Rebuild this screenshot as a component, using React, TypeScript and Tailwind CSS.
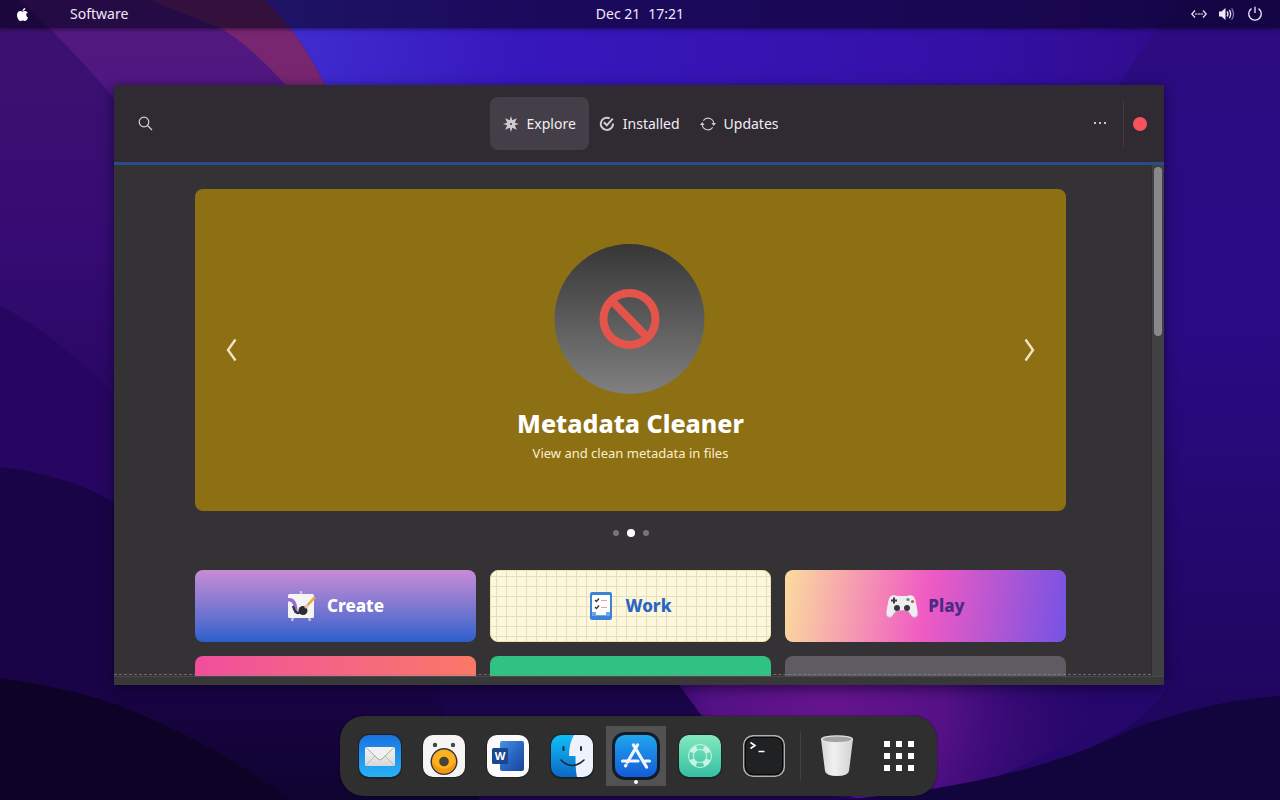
import type { ReactNode } from "react";
import { FaApple } from "react-icons/fa";

function Wallpaper() {
  return (
    <svg
      className="absolute inset-0 h-full w-full"
      viewBox="0 0 1280 800"
      preserveAspectRatio="none"
      aria-hidden="true"
    >
      <defs>
        <linearGradient id="wp-base" x1="0" y1="0" x2="1" y2="1">
          <stop offset="0" stopColor="#3c1590" />
          <stop offset="0.45" stopColor="#3210a0" />
          <stop offset="0.7" stopColor="#2a0c80" />
          <stop offset="1" stopColor="#1c0656" />
        </linearGradient>
        <linearGradient id="wp-top" x1="0" y1="0" x2="1" y2="0">
          <stop offset="0" stopColor="#402fd2" />
          <stop offset="0.25" stopColor="#3718bd" />
          <stop offset="0.7" stopColor="#3510a6" />
          <stop offset="0.95" stopColor="#2d0b84" />
          <stop offset="1" stopColor="#2b0a7c" />
        </linearGradient>
        <linearGradient id="wp-left" x1="0" y1="0" x2="0" y2="1">
          <stop offset="0" stopColor="#3c126e" />
          <stop offset="0.5" stopColor="#360c74" />
          <stop offset="1" stopColor="#25065f" />
        </linearGradient>
        <linearGradient id="wp-violet" gradientUnits="userSpaceOnUse" x1="0" y1="28" x2="0" y2="120">
          <stop offset="0" stopColor="#52197f" />
          <stop offset="0.6" stopColor="#501782" />
          <stop offset="1" stopColor="#3e1078" />
        </linearGradient>
        <linearGradient id="wp-right" x1="0" y1="0" x2="0" y2="1">
          <stop offset="0" stopColor="#2c0c7f" />
          <stop offset="0.4" stopColor="#2b0b85" />
          <stop offset="0.75" stopColor="#230768" />
          <stop offset="1" stopColor="#1c0556" />
        </linearGradient>
        <linearGradient id="wp-deep" x1="0" y1="0" x2="0" y2="1">
          <stop offset="0" stopColor="#1a0446" />
          <stop offset="1" stopColor="#0f0330" />
        </linearGradient>
        <radialGradient id="wp-glow" gradientUnits="userSpaceOnUse" cx="830" cy="700" r="290">
          <stop offset="0" stopColor="#66158c" />
          <stop offset="0.4" stopColor="#551186" />
          <stop offset="1" stopColor="#240668" stopOpacity="0" />
        </radialGradient>
      </defs>
      <rect width="1280" height="800" fill="url(#wp-base)" />
      <path d="M260 0H1280V400H330Z" fill="url(#wp-top)" />
      <path d="M1180 0H1280V800H1050V400Q1040 160 1180 0Z" fill="url(#wp-right)" />
      <path d="M0 0H265Q305 40 327 90V460H0Z" fill="url(#wp-left)" />
      <path d="M20 0H230Q270 55 290 90V120H130Q90 65 20 0Z" fill="url(#wp-violet)" />
      <path d="M150 0H265Q305 40 327 90H290Q250 45 220 28Z" fill="#77266f" />
      <path d="M0 305Q70 345 118 400V560H0Z" fill="#260660" />
      <path d="M0 467Q70 475 118 505L420 680V800H0Z" fill="#190447" />
      <path d="M0 678Q70 688 118 705Q220 745 290 800H0Z" fill="#0e0326" />
      <path d="M114 680H440L480 800H290Q220 745 114 703Z" fill="url(#wp-deep)" />
      <path d="M430 680H680L860 800H480Z" fill="#190548" />
      <path d="M675 680H1170Q1150 740 950 800H860L790 790Z" fill="#26076c" />
      <path d="M675 680H1200L950 800H860L720 740Z" fill="url(#wp-glow)" />
      <path d="M840 800Q1020 785 1130 730Q1210 700 1280 696V800Z" fill="#12043d" />
    </svg>
  );
}

function TopBar() {
  return (
    <header className="relative grid h-7 shrink-0 grid-cols-[1fr_auto_1fr] items-center bg-[#08021c]/60 px-[15px] text-sm text-[#f0e8f8] shadow-[0_1px_4px_rgba(8,2,28,0.6)]">
      <div className="flex items-center gap-[41px]">
        <button aria-label="System menu" className="w-[14px] text-white">
          <FaApple size={15} />
        </button>
        <button>Software</button>
      </div>
      <button className="flex gap-2">
        <span>Dec 21</span>
        <span>17:21</span>
      </button>
      <div className="flex items-center justify-end gap-3 pr-[2px]">
        <button aria-label="Network">
          <svg width="16" height="16" viewBox="0 0 16 16" fill="none" stroke="currentColor" strokeWidth="1.2">
            <path d="M4 4.5L.8 8L4 11.5M12 4.5L15.200 8L12 11.500" />
            <path d="M4 8H12" strokeDasharray="2.400 .4" />
          </svg>
        </button>
        <button aria-label="Volume">
          <svg width="16" height="16" viewBox="0 0 16 16" fill="none" stroke="currentColor" strokeWidth="1.3">
            <path d="M0 5.500H2.500L6.500 2V14L2.500 10.500H0Z" fill="currentColor" stroke="none" />
            <path d="M8 5.500Q10 8 8 10.500M10.300 3.800Q13 8 10.300 12.200" />
            <path d="M12.600 2.300Q16.500 8 12.600 13.700" opacity="0.5" />
          </svg>
        </button>
        <button aria-label="Power">
          <svg width="16" height="16" viewBox="0 0 16 16" fill="none" stroke="currentColor" strokeWidth="1.300">
            <path d="M4.500 2.600A6.300 6.300 0 1 0 11.500 2.600M8 .8V7" />
          </svg>
        </button>
      </div>
    </header>
  );
}

function StarIcon() {
  return (
    <svg width="16" height="16" viewBox="0 0 16 16" fill="currentColor" fillRule="evenodd">
      <path d="M8 0L9.300 4.200L13.800 2.200L11.800 6.700L16 8L11.800 9.300L13.800 13.800L9.300 11.800L8 16L6.700 11.800L2.200 13.800L4.200 9.300L0 8L4.200 6.700L2.200 2.200L6.700 4.200ZM8 6.900A1.100 1.100 0 1 0 8 9.100A1.100 1.100 0 1 0 8 6.900Z" />
    </svg>
  );
}

function InstalledIcon() {
  return (
    <svg width="16" height="16" viewBox="0 0 16 16" fill="none" stroke="currentColor" strokeWidth="2">
      <path d="M10.700 2.400A6.100 6.100 0 1 0 14 7.500" />
      <path d="M4.800 6.300L7.800 9.300L13.800 2.600" />
    </svg>
  );
}

function UpdatesIcon() {
  return (
    <svg width="16" height="16" viewBox="0 0 16 16" fill="none" stroke="currentColor" strokeWidth="1.100">
      <path d="M3.300 4.600A5.800 5.800 0 0 1 13.800 8M2.200 8A5.800 5.800 0 0 0 12.700 11.400" />
      <path d="M11.400 7H16L13.700 10ZM0 9H4.600L2.300 6Z" fill="currentColor" stroke="none" />
    </svg>
  );
}

const tabs: { label: string; icon: ReactNode; active?: boolean }[] = [
  { label: "Explore", icon: <StarIcon />, active: true },
  { label: "Installed", icon: <InstalledIcon /> },
  { label: "Updates", icon: <UpdatesIcon /> },
];

function WindowHeader() {
  return (
    <div className="grid shrink-0 grid-cols-[1fr_auto_1fr] items-center border-b-[3px] border-[#294c86] bg-[#302a33] pt-3 pb-3">
      <button aria-label="Search" className="w-fit pl-6 text-[#d6d2d8]">
        <svg width="15" height="15" viewBox="0 0 15 15" fill="none" stroke="currentColor" strokeWidth="1.200">
          <circle cx="6" cy="6" r="4.800" />
          <path d="M9.500 9.500L14 14" />
        </svg>
      </button>
      <nav className="flex text-[#f0eef2]">
        {tabs.map((tab) => (
          <button
            key={tab.label}
            className={
              tab.active
                ? "flex h-[53px] items-center gap-2 rounded-lg bg-[#443e48] px-[13px] text-sm"
                : "flex h-[53px] items-center gap-2 px-[10px] text-sm"
            }
          >
            <span className="text-[#cfccd2]">{tab.icon}</span>
            {tab.label}
          </button>
        ))}
      </nav>
      <div className="flex items-center justify-end pr-[17px]">
        <button aria-label="Menu" className="mr-4 text-[#c8c5ca]">
          <svg width="14" height="14" viewBox="0 0 14 14" fill="currentColor">
            <rect x="1" y="5" width="2" height="2" />
            <rect x="6" y="5" width="2" height="2" />
            <rect x="11" y="5" width="2" height="2" />
          </svg>
        </button>
        <div className="h-12 w-px bg-[#3f3942]" />
        <button aria-label="Close" className="ml-[9px] size-[14px] rounded-full bg-[#f9525a]" />
      </div>
    </div>
  );
}

function Carousel() {
  return (
    <section aria-label="Featured">
      <div className="flex h-[322px] items-center justify-between rounded-lg bg-[#8c7013] px-7">
        <button aria-label="Previous" className="text-[#f4e4c0]">
          <svg width="16" height="24" viewBox="0 0 16 24" fill="none" stroke="currentColor" strokeWidth="2.400">
            <path d="M12.500 1.500L5 12L12.500 22.500" />
          </svg>
        </button>
        <div className="flex flex-col items-center pt-[6px]">
          <svg width="152" height="152" viewBox="0 0 152 152" aria-hidden="true">
            <defs>
              <linearGradient id="badge" x1="0" y1="0" x2="0" y2="1">
                <stop offset="0" stopColor="#363636" />
                <stop offset="1" stopColor="#808080" />
              </linearGradient>
            </defs>
            <circle cx="75.500" cy="76" r="75" fill="url(#badge)" />
            <g fill="none" stroke="#e5544b" strokeWidth="8">
              <circle cx="75.500" cy="76" r="26" />
              <path d="M57 57L94 95" />
            </g>
          </svg>
          <h1 className="mt-2 text-[25px] leading-10 font-extrabold text-white">Metadata Cleaner</h1>
          <p className="text-[13px] leading-5 text-[#fdeecb]">View and clean metadata in files</p>
        </div>
        <button aria-label="Next" className="text-[#f4e4c0]">
          <svg width="16" height="24" viewBox="0 0 16 24" fill="none" stroke="currentColor" strokeWidth="2.400">
            <path d="M3.500 1.500L11 12L3.500 22.500" />
          </svg>
        </button>
      </div>
      <div className="flex h-11 items-center justify-center gap-2">
        <span className="size-[6px] rounded-full bg-[#76737a]" />
        <span className="size-2 rounded-full bg-white" />
        <span className="size-[6px] rounded-full bg-[#76737a]" />
      </div>
    </section>
  );
}

function EaselIcon() {
  return (
    <svg width="30" height="30" viewBox="0 0 30 30">
      <path d="M14 0V5M6 26L5 30M22 26L23 30" stroke="#c9c5cf" strokeWidth="2.400" />
      <rect x="1" y="3" width="26" height="24" rx="1.500" fill="#f5f4f6" />
      <path d="M1 9Q6 8 8 14Q9 19 9 22" fill="none" stroke="#9a6bd0" strokeWidth="3.500" />
      <path d="M6 15Q8 22 11 22Q13 21.500 14 20" fill="none" stroke="#34343c" strokeWidth="2.400" />
      <circle cx="16" cy="19.500" r="4.500" fill="#2c2c32" />
      <path d="M18 17L28 6" stroke="#f0a733" strokeWidth="2.600" />
      <path d="M18.500 16.500L21 14" stroke="#d9cfc0" strokeWidth="3" />
    </svg>
  );
}

function ClipboardIcon() {
  return (
    <svg width="22" height="28" viewBox="0 0 22 28">
      <rect width="22" height="28" rx="2" fill="#3c83d6" />
      <rect x="2" y="3" width="18" height="20" rx="1" fill="#fff" />
      <path d="M2 20H6V23H16V20H20V24H2Z" fill="#67a7ea" />
      <path d="M5 8L6.500 9.500L9 6.500M5 15L6.500 16.500L9 13.500" fill="none" stroke="#333" strokeWidth="1.300" />
      <path d="M11 8.500H17M11 15.500H17" stroke="#e0a6a6" strokeWidth="1" />
    </svg>
  );
}

function GamepadIcon() {
  return (
    <svg width="32" height="23" viewBox="0 0 32 23">
      <path
        d="M6 .5Q9 0 11 1H21Q23 0 26 .5Q29 1 30 8Q32 17 31.500 20Q30 23 27 22Q25 20 22.500 16.500Q16 14 9.500 16.500Q7 20 5 22Q2 23 .5 20Q0 17 2 8Q3 1 6 .5Z"
        fill="#efedf1"
      />
      <path d="M.5 20Q2 23 5 22Q7 20 9.500 16.500M31.500 20Q30 23 27 22Q25 20 22.500 16.500" fill="none" stroke="#cfc6d6" />
      <path d="M8 2.500V8.500M5 5.500H11" stroke="#3b3b40" strokeWidth="2" />
      <circle cx="11" cy="13" r="3" fill="#34393b" />
      <circle cx="21" cy="13" r="3" fill="#34393b" />
      <circle cx="22" cy="4.500" r="1.600" fill="#3d9c6f" />
      <circle cx="26.500" cy="6.500" r="1.600" fill="#d64545" />
    </svg>
  );
}

function Categories() {
  const tile = "flex h-[72px] items-center justify-center rounded-lg text-[17px] font-extrabold";
  return (
    <section aria-label="Categories" className="mt-[15px] grid grid-cols-3 gap-[14px]">
      <button className={`${tile} gap-[10px] bg-linear-to-b from-[#c88cd6] to-[#2a5fcb] text-white`}>
        <EaselIcon />
        Create
      </button>
      <button
        className={`${tile} gap-[14px] border border-[#efe2a8] bg-[#fdf8dc] bg-[linear-gradient(#e4dec0_1px,transparent_1px),linear-gradient(90deg,#e4dec0_1px,transparent_1px)] bg-size-[10px_10px] bg-position-[5px_5px] text-[#2a65c4]`}
      >
        <ClipboardIcon />
        Work
      </button>
      <button className={`${tile} gap-[10px] bg-linear-[98deg,#fbdc9e,#f05ac3_50%,#7553e4] text-[#4a2a84]`}>
        <GamepadIcon />
        Play
      </button>
      <button aria-label="Socialize" className={`${tile} bg-linear-to-r from-[#f04e9c] to-[#fa7866]`} />
      <button aria-label="Learn" className={`${tile} bg-[#2fc281]`} />
      <button aria-label="Develop" className={`${tile} bg-[#5e5c62]`} />
    </section>
  );
}

function SoftwareWindow() {
  return (
    <main className="flex min-h-0 flex-1 flex-col bg-[#353236] shadow-[0_3px_12px_rgba(10,2,40,0.65)]">
      <WindowHeader />
      <div className="flex min-h-0 flex-1">
        <div className="relative min-w-0 flex-1 overflow-hidden pt-6 pr-[85px] pl-[81px]">
          <Carousel />
          <Categories />
          <div className="absolute inset-x-0 bottom-px border-b border-dashed border-[#8a868c]/70" />
        </div>
        <div className="w-[13px] shrink-0 border-l border-[#2e2c2f] bg-[#414042] px-[2px] pt-[2px]">
          <div className="h-[169px] w-2 rounded-full bg-[#89878b]" />
        </div>
      </div>
      <div className="h-[9px] shrink-0 border-t border-[#4a4a4c] bg-[#383838]" />
    </main>
  );
}

function MailIcon() {
  return (
    <svg width="46" height="46" viewBox="0 0 46 46">
      <defs>
        <linearGradient id="mail-bg" x1="0" y1="0" x2="0" y2="1">
          <stop offset="0" stopColor="#1a74e0" />
          <stop offset="1" stopColor="#27b2f6" />
        </linearGradient>
        <linearGradient id="mail-env" x1="0" y1="0" x2="0" y2="1">
          <stop offset="0" stopColor="#f6f5f3" />
          <stop offset="1" stopColor="#d8d8d8" />
        </linearGradient>
      </defs>
      <rect x="1" y="1" width="44" height="45" rx="11" fill="#1e2226" />
      <rect x="2" y="2" width="42" height="42" rx="10" fill="url(#mail-bg)" />
      <rect x="8" y="14" width="30" height="19" rx="1.500" fill="url(#mail-env)" />
      <path d="M9 32L19 22M37 32L27 22" stroke="#b9b9b9" />
      <path d="M9 14.500L21 26Q23 28 25 26L37 14.500" fill="#f1f0ee" stroke="#a9a9a9" />
    </svg>
  );
}

function SpeakerBearIcon() {
  return (
    <svg width="46" height="46" viewBox="0 0 46 46">
      <rect x="1" y="2" width="44" height="43" rx="11" fill="#232323" />
      <rect x="2" y="2" width="42" height="42" rx="10" fill="#f7f5f4" />
      <circle cx="14" cy="12" r="2.200" fill="#344a45" />
      <circle cx="32" cy="12" r="2.200" fill="#3d4a48" />
      <circle cx="23" cy="28.500" r="13.500" fill="#343639" />
      <circle cx="23" cy="28.500" r="12" fill="#fdb022" />
      <path d="M11 28.500A12 12 0 0 0 35 28.500Q29 36 23 36Q17 36 11 28.500Z" fill="#f4980e" />
      <circle cx="23" cy="28.500" r="4.800" fill="#494236" />
    </svg>
  );
}

function WordIcon() {
  return (
    <svg width="46" height="46" viewBox="0 0 46 46">
      <defs>
        <linearGradient id="word-doc" x1="0" y1="0" x2="1" y2="1">
          <stop offset="0" stopColor="#4a93e6" />
          <stop offset="0.5" stopColor="#2a66c0" />
          <stop offset="1" stopColor="#1a429a" />
        </linearGradient>
      </defs>
      <rect x="1" y="2" width="44" height="43" rx="11" fill="#232323" />
      <rect x="2" y="2" width="42" height="42" rx="10" fill="#fbfbfc" />
      <rect x="15" y="8" width="24" height="30" rx="2" fill="url(#word-doc)" />
      <rect x="7" y="15" width="16" height="16" rx="1.500" fill="#1a478f" />
      <text x="15" y="27" textAnchor="middle" fontSize="11" fontWeight="700" fill="#fff">
        W
      </text>
    </svg>
  );
}

function FinderIcon() {
  return (
    <svg width="46" height="46" viewBox="0 0 46 46">
      <defs>
        <linearGradient id="finder-bg" x1="0" y1="0" x2="0" y2="1">
          <stop offset="0" stopColor="#10bff8" />
          <stop offset="1" stopColor="#0d68c4" />
        </linearGradient>
      </defs>
      <rect x="1" y="1" width="44" height="45" rx="11" fill="#1c2124" />
      <rect x="2" y="2" width="42" height="42" rx="10" fill="url(#finder-bg)" />
      <path d="M25 2H34A10 10 0 0 1 44 12V34A10 10 0 0 1 34 44H28Q26.500 38 26.500 23H20Q20 10 25 2Z" fill="#eff2fa" />
      <path d="M12 27Q23 38 35 27" fill="none" stroke="#1c2b3c" strokeWidth="1.600" strokeLinecap="round" />
      <path d="M14.500 14V17M32 14V17" stroke="#1c2b3c" strokeWidth="2" strokeLinecap="round" />
    </svg>
  );
}

function AppStoreIcon() {
  return (
    <svg width="50" height="50" viewBox="0 0 50 50">
      <defs>
        <linearGradient id="store-bg" x1="0" y1="0" x2="0" y2="1">
          <stop offset="0" stopColor="#1fa6ee" />
          <stop offset="1" stopColor="#145bd8" />
        </linearGradient>
      </defs>
      <rect x="1" y="1" width="48" height="48" rx="13" fill="#141b26" />
      <rect x="4" y="4" width="42" height="42" rx="10" fill="url(#store-bg)" />
      <g fill="none" stroke="#f2f5fc" strokeWidth="3.200" strokeLinecap="round">
        <path d="M26.500 14L16.500 31M22.500 14L35.500 36" />
        <path d="M11.500 30H27M34 30H38.500" />
        <path d="M14.500 35L15 34.200" />
      </g>
    </svg>
  );
}

function HelpIcon() {
  return (
    <svg width="46" height="46" viewBox="0 0 46 46">
      <defs>
        <linearGradient id="help-bg" x1="0" y1="0" x2="0" y2="1">
          <stop offset="0" stopColor="#83e9bf" />
          <stop offset="1" stopColor="#35bfa2" />
        </linearGradient>
      </defs>
      <rect x="1" y="1" width="44" height="45" rx="11" fill="#1e2424" />
      <rect x="2" y="2" width="42" height="42" rx="10" fill="url(#help-bg)" />
      <g fill="none" stroke="#c9f3e2">
        <circle cx="23" cy="23" r="11.500" />
        <circle cx="23" cy="23" r="6.500" />
        <circle cx="23" cy="23" r="9" strokeWidth="4.500" strokeDasharray="7 7.137" strokeDashoffset="-3.500" />
      </g>
    </svg>
  );
}

function TerminalIcon() {
  return (
    <svg width="46" height="46" viewBox="0 0 46 46">
      <rect x="2" y="2" width="42" height="42" rx="10" fill="#b2b2b2" />
      <rect x="3.400" y="3.400" width="39.200" height="39.200" rx="9" fill="#090909" />
      <rect x="5" y="5" width="36" height="36" rx="7" fill="#202122" />
      <path d="M9.500 9.500L14 12.500L9.500 15.500M17.500 18.500H23.500" fill="none" stroke="#fff" strokeWidth="1.600" />
    </svg>
  );
}

function TrashIcon() {
  return (
    <svg width="36" height="44" viewBox="0 0 36 44">
      <defs>
        <linearGradient id="bin" x1="0" y1="0" x2="1" y2="0">
          <stop offset="0" stopColor="#d6d6d6" />
          <stop offset="0.4" stopColor="#f1f1f1" />
          <stop offset="1" stopColor="#d2d2d2" />
        </linearGradient>
      </defs>
      <path d="M2 5L6 37Q7 42 18 42Q29 42 30 37L34 5Z" fill="url(#bin)" />
      <ellipse cx="18" cy="5" rx="16" ry="3.800" fill="#e4e4e4" />
      <ellipse cx="18" cy="5.200" rx="14.500" ry="2.800" fill="#a2a2a2" />
    </svg>
  );
}

function GridIcon() {
  return (
    <svg width="32" height="32" viewBox="0 0 32 32" fill="#fff">
      {[1, 13, 25].map((y) => [1, 13, 25].map((x) => <rect key={`${x}-${y}`} x={x} y={y} width="6" height="6" />))}
    </svg>
  );
}

function DockItem({ label, active, children }: { label: string; active?: boolean; children: ReactNode }) {
  return (
    <button
      aria-label={label}
      className={
        active
          ? "relative flex size-[60px] items-center justify-center bg-[#525252]"
          : "flex size-[60px] items-center justify-center"
      }
    >
      {children}
      {active && <span className="absolute bottom-[2px] left-7 size-1 rounded-full bg-white" />}
    </button>
  );
}

function Dock() {
  return (
    <nav aria-label="Dock" className="relative mb-1 flex shrink-0 justify-center pr-1">
      <div className="flex h-20 items-center gap-1 rounded-3xl bg-[#2f2f2f] px-[10px] shadow-[0_0_2px_rgba(0,0,0,0.6)]">
        <DockItem label="Mail"><MailIcon /></DockItem>
        <DockItem label="Music"><SpeakerBearIcon /></DockItem>
        <DockItem label="Word"><WordIcon /></DockItem>
        <DockItem label="Files"><FinderIcon /></DockItem>
        <DockItem label="Software" active><AppStoreIcon /></DockItem>
        <DockItem label="Help"><HelpIcon /></DockItem>
        <DockItem label="Terminal"><TerminalIcon /></DockItem>
        <div className="mx-[2px] h-12 w-px bg-[#414141]" />
        <DockItem label="Trash"><TrashIcon /></DockItem>
        <button aria-label="Show applications" className="flex h-[60px] w-14 items-center justify-center">
          <GridIcon />
        </button>
      </div>
    </nav>
  );
}

export default function App() {
  return (
    <div className="relative flex h-screen flex-col overflow-hidden bg-[#2a0c80] font-['Noto_Sans',sans-serif]">
      <Wallpaper />
      <TopBar />
      <div className="relative flex min-h-0 flex-1 flex-col pt-[57px] pr-[116px] pb-[31px] pl-[114px]">
        <SoftwareWindow />
      </div>
      <Dock />
    </div>
  );
}
